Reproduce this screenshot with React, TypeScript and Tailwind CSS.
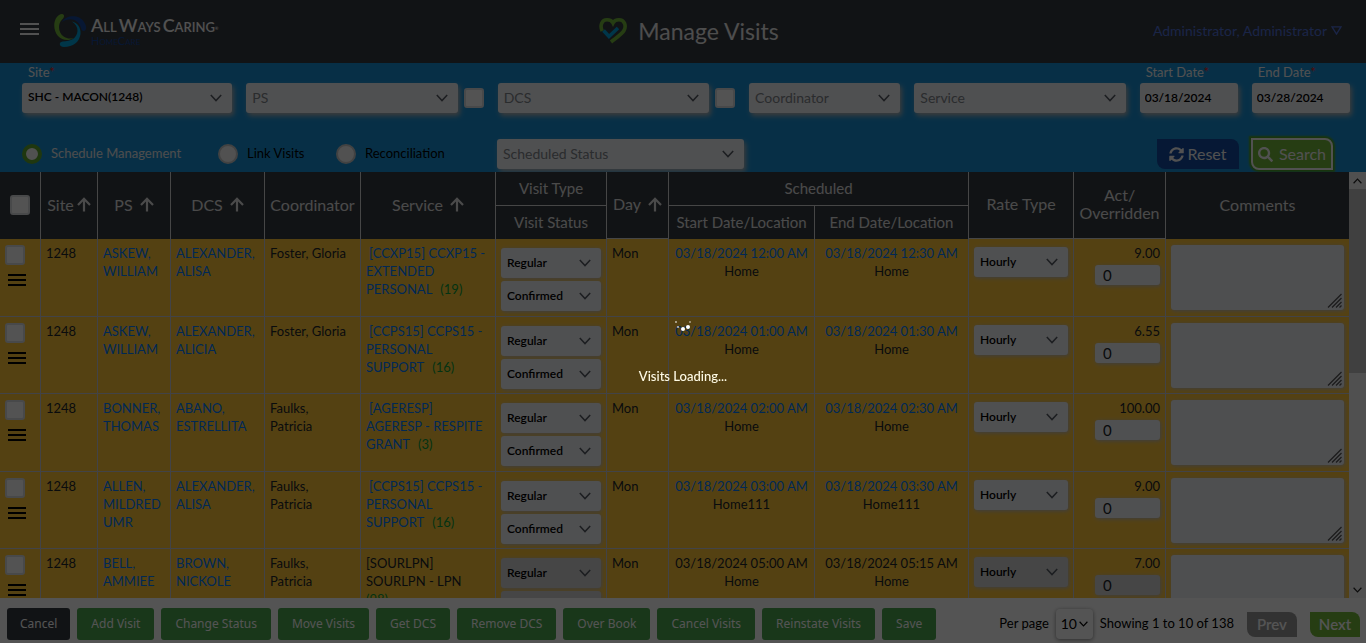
import React from "react";
import { FaSearch, FaSyncAlt } from "react-icons/fa";

type Option = { label: string; className?: string; muted?: boolean; disabled?: boolean };

function Chevron({ className, stroke = "#555b63" }: { className?: string; stroke?: string }) {
  return (
    <svg viewBox="0 0 12 8" className={className ?? "w-3 h-2"} fill="none" stroke={stroke} strokeWidth="1.5">
      <path d="M0.8 1 L6 6.6 L11.2 1" />
    </svg>
  );
}

function Picker({ label, className = "", muted = false, disabled = false }: Option) {
  return (
    <div className={`grid items-center rounded-[3px] ${disabled ? "bg-[#d4d4d4]" : "bg-[#f0f1f4]"} ${className}`}>
      <select
        aria-label={label}
        className={`[grid-area:1/1] h-full w-full min-w-0 appearance-none bg-transparent px-[6px] ${muted ? "text-[#80858b]" : "text-black"}`}
      >
        <option>{label}</option>
      </select>
      <Chevron className="[grid-area:1/1] pointer-events-none mr-[10px] h-2 w-3 justify-self-end" />
    </div>
  );
}

const filterPicker = "h-[30px] [&>select]:pb-[2px] shadow-[2px_3px_5px_#b4b4b4]";
const rowPicker = "h-[30px] text-[12px] font-semibold shadow-[1px_1px_4px_#b8bcc8]";

function Tick({ label }: { label: string }) {
  return (
    <input
      type="checkbox"
      aria-label={label}
      className="size-5 shrink-0 appearance-none rounded-[3px] border-2 border-[#dadce0] bg-[#fbfbfb]"
    />
  );
}

function Arrow() {
  return (
    <svg viewBox="0 0 14 15" className="h-[15px] w-[14px] shrink-0" fill="none" stroke="currentColor" strokeWidth="2.2">
      <path d="M7 14.5V2M1 8l6-6.2L13 8" />
    </svg>
  );
}

function Logo() {
  return (
    <div className="flex items-start gap-1">
      <svg viewBox="0 0 34 35" className="h-[35px] w-[34px]">
        <path fill="#74b83c" d="M9 1 C12 1.500 11.500 4.500 9 6.500 C4.500 11 5 20 11 23.800 C14 25.700 17 26 20.500 25 C16 28.500 9 27.500 5 23 C-1 16 0.500 4 7.500 1.200 Z" />
        <path fill="#17479a" d="M9 9 C13 2 26 1 31 9 C33 12 34 15 32.500 17 C31 19 28.500 18 28 15 C26 6 16 4 9 9 Z" />
        <path fill="#00a3dc" d="M19 8.500 C25 10 28 15 27.500 21 C26.500 29 20 34 11 34 C6 34 5.500 29 9.500 28.500 C18 28.500 24 25 24.500 18 C24.700 14 22.500 11 19 8.500 Z" />
      </svg>
      <div className="flex flex-col pt-[2px]">
        <span className="flex gap-[2px] text-[18px] font-semibold leading-[21px] text-[#f4f4f4] [font-variant:small-caps]">
          <span>All</span><span>Ways</span><span>Caring<sup className="text-[4px]">®</sup></span>
        </span>
        <span className="text-[11px] leading-[10px] text-[#17479a] [font-variant:small-caps]">HomeCare</span>
      </div>
    </div>
  );
}

function Heart() {
  return (
    <svg viewBox="0 0 28 27" className="h-[27px] w-7" fill="none" strokeWidth="3.600">
      <path d="M3.200 14 C0.500 8 3 2.800 8 2.800 C11 2.800 13 4 14 6 C15 4 17 2.800 20 2.800 C25 2.800 27.800 8 25 13.500 C23 17 17 21 12 25" stroke="#74b83c" />
      <path d="M4.500 13.500 L10 19.500 L19 11" stroke="#00a3dc" />
    </svg>
  );
}

type Visit = {
  ps: string; dcs: string; coord: string; service: string[]; count: string;
  start: string; end: string; place: string; hours: string; locked?: boolean;
};

const visits: Visit[] = [
  { ps: "ASKEW, WILLIAM", dcs: "ALEXANDER, ALISA", coord: "Foster, Gloria", service: ["[CCXP15] CCXP15 -", "EXTENDED", "PERSONAL"], count: "(19)", start: "03/18/2024 12:00 AM", end: "03/18/2024 12:30 AM", place: "Home", hours: "9.00" },
  { ps: "ASKEW, WILLIAM", dcs: "ALEXANDER, ALICIA", coord: "Foster, Gloria", service: ["[CCPS15] CCPS15 -", "PERSONAL", "SUPPORT"], count: "(16)", start: "03/18/2024 01:00 AM", end: "03/18/2024 01:30 AM", place: "Home", hours: "6.55" },
  { ps: "BONNER, THOMAS", dcs: "ABANO, ESTRELLITA", coord: "Faulks, Patricia", service: ["[AGERESP]", "AGERESP - RESPITE", "GRANT"], count: "(3)", start: "03/18/2024 02:00 AM", end: "03/18/2024 02:30 AM", place: "Home", hours: "100.00" },
  { ps: "ALLEN, MILDRED UMR", dcs: "ALEXANDER, ALISA", coord: "Faulks, Patricia", service: ["[CCPS15] CCPS15 -", "PERSONAL", "SUPPORT"], count: "(16)", start: "03/18/2024 03:00 AM", end: "03/18/2024 03:30 AM", place: "Home111", hours: "9.00" },
  { ps: "BELL, AMMIEE", dcs: "BROWN, NICKOLE", coord: "Faulks, Patricia", service: ["[SOURLPN]", "SOURLPN - LPN", ""], count: "(98)", start: "03/18/2024 05:00 AM", end: "03/18/2024 05:15 AM", place: "Home", hours: "7.00", locked: true },
];

const link = "text-[#007bff]";
const cell = "border-r border-b border-[#c9cbd6] px-[5px] align-top last:border-r-0";
const textCell = `${cell} pt-[5px]`;
const head = "border-r border-[#d5d5d5] p-0 pb-[2px] font-normal last:border-r-0";

function Service({ v }: { v: Visit }) {
  const tint = v.locked ? "" : link;
  return (
    <div className="flex flex-col">
      {v.service.map((line, i) => (
        <div key={i} className={`flex gap-2 whitespace-nowrap ${i === 0 && !v.locked ? "pl-[3px]" : ""}`}>
          {line && <a href="#service" className={tint}>{line}</a>}
          {i === 2 && <a href="#auth" className="text-[#0a9a3a]">{v.count}</a>}
        </div>
      ))}
    </div>
  );
}

function VisitRow({ v }: { v: Visit }) {
  return (
    <tr className="odd:h-[78px] even:h-[77px]">
      <td className={`${cell} pt-[6px]`}>
        <div className="flex flex-col gap-[9px]">
          <Tick label={`Select ${v.ps} ${v.start}`} />
          <button aria-label="Row menu" className="ml-[3px] flex w-[18px] flex-col gap-[3px]">
            <span className="h-[2px] bg-black" /><span className="h-[2px] bg-black" /><span className="h-[2px] bg-black" />
          </button>
        </div>
      </td>
      <td className={textCell}>1248</td>
      <td className={textCell}><a href="#ps" className={link}>{v.ps}</a></td>
      <td className={textCell}><a href="#dcs" className={link}>{v.dcs}</a></td>
      <td className={`${textCell} pr-[10px]`}>{v.coord}</td>
      <td className={textCell}><Service v={v} /></td>
      <td className={`${cell} pt-[9px]`}>
        <div className="flex flex-col gap-[3px]">
          <Picker label="Regular" className={rowPicker} disabled={v.locked} />
          <Picker label="Confirmed" className={rowPicker} disabled={v.locked} />
        </div>
      </td>
      <td className={textCell}>Mon</td>
      {[v.start, v.end].map((t) => (
        <td key={t} className={`${textCell} text-center`}>
          {v.locked ? <span>{t}</span> : <a href="#visit" className={link}>{t}</a>}
          <div>{v.place}</div>
        </td>
      ))}
      <td className={`${cell} pt-[8px]`}><Picker label="Hourly" className={rowPicker} disabled={v.locked} /></td>
      <td className={`${textCell} text-right`}>
        <div className="flex flex-col items-end gap-[3px]">
          <span>{v.hours}</span>
          <input
            aria-label="Overridden hours"
            defaultValue="0"
            className={`h-5 w-[65px] rounded-[3px] px-2 pb-px text-[15px] shadow-[1px_1px_4px_#b8bcc8] ${v.locked ? "bg-[#d4d4d4]" : "bg-[#f0f1f4]"}`}
          />
        </div>
      </td>
      <td className={`${cell} pt-[6px]`}>
        <div className="grid">
          <textarea aria-label="Comments" className="[grid-area:1/1] block h-[65px] w-full resize-none rounded-[3px] bg-[#eceef3] shadow-[1px_1px_4px_#b8bcc8]" />
          <svg viewBox="0 0 15 15" className="[grid-area:1/1] pointer-events-none mr-[2px] mb-[2px] size-[15px] self-end justify-self-end" stroke="#555" strokeWidth="1.300">
            <path d="M1 14.500L14.500 1M5 14.500L14.500 5M9 14.500L14.500 9M12.500 14.500L14.500 12.500" />
          </svg>
        </div>
      </td>
    </tr>
  );
}

function SortHead({ text, gap = "gap-[7px]", className = "" }: { text: string; gap?: string; className?: string }) {
  return (
    <th rowSpan={2} className={`${head} ${className}`}>
      <div className={`flex items-center justify-center ${gap}`}>{text}<Arrow /></div>
    </th>
  );
}

function DateField({ id, label, value }: { id: string; label: string; value: string }) {
  return (
    <div className="flex min-w-0 flex-[98] flex-col">
      <label htmlFor={id} className="h-5 pl-[6px] text-[13px] leading-[18px] text-[#f4f4f4]">{label}<span className="text-[#e02020]">*</span></label>
      <input id={id} defaultValue={value} className="h-[30px] w-full rounded-[3px] bg-[#f0f1f4] px-[5px] pb-[2px] text-[12px] font-semibold shadow-[2px_3px_5px_#b4b4b4]" />
    </div>
  );
}

const actions = ["Add Visit", "Change Status", "Move Visits", "Get DCS", "Remove DCS", "Over Book", "Cancel Visits", "Reinstate Visits", "Save"];
const modes = [
  { name: "Schedule Management", width: "w-[196px]" },
  { name: "Link Visits", width: "w-[118px]" },
  { name: "Reconciliation", width: "w-[161px]" },
];

export default function App() {
  return (
    <div className="flex h-screen flex-col overflow-hidden bg-white font-['Lato','Liberation_Sans',sans-serif] text-black">
      <header className="grid h-[63px] shrink-0 grid-cols-[1fr_auto_1fr] items-center bg-[#363b41] pr-6 pb-[2px] pl-5">
        <div className="flex items-center gap-[14px]">
          <button aria-label="Main menu" className="flex w-[19px] flex-col gap-[3px] pb-1">
            <span className="h-[2px] bg-[#f4f4f4]" /><span className="h-[2px] bg-[#f4f4f4]" /><span className="h-[2px] bg-[#f4f4f4]" />
          </button>
          <Logo />
        </div>
        <div className="flex items-center gap-[11px] pl-4">
          <Heart />
          <h1 className="text-[23px] leading-8 text-[#e8e8e8]">Manage Visits</h1>
        </div>
        <button className="flex items-center gap-1 justify-self-end text-[14px] text-[#5070d8]">
          Administrator, Administrator
          <svg viewBox="0 0 12 10" className="h-[9px] w-[11px]" fill="none" stroke="currentColor" strokeWidth="1.500"><path d="M1 1h10L6 9z" /></svg>
        </button>
      </header>

      <section className="flex h-[109px] shrink-0 flex-col gap-[25px] bg-[#1890d5] pr-4 pl-[22px]">
        <div className="flex items-end gap-[14px]">
          <div className="flex min-w-0 flex-[210] flex-col">
            <label className="h-5 pl-[6px] text-[13px] leading-[18px] text-[#f4f4f4]">Site<span className="text-[#e02020]">*</span></label>
            <Picker label="SHC - MACON(1248)" className={`${filterPicker} text-[12px] font-semibold`} />
          </div>
          {["PS", "DCS"].map((n) => (
            <div key={n} className="flex min-w-0 flex-[237] items-center gap-[6px]">
              <Picker label={n} muted className={`${filterPicker} min-w-0 flex-1 text-[14px]`} />
              <Tick label={`Include inactive ${n}`} />
            </div>
          ))}
          <Picker label="Coordinator" muted className={`${filterPicker} min-w-0 flex-[151] text-[14px]`} />
          <Picker label="Service" muted className={`${filterPicker} min-w-0 flex-[211] text-[14px]`} />
          <DateField id="start" label="Start Date" value="03/18/2024" />
          <DateField id="end" label="End Date" value="03/28/2024" />
        </div>
        <div className="flex items-center">
          {modes.map((m, i) => (
            <label key={m.name} className={`flex shrink-0 items-center gap-[9px] text-[13px] ${m.width} ${i === 0 ? "text-[#e8e8e8]" : "text-black"}`}>
              <input
                type="radio"
                name="mode"
                defaultChecked={i === 0}
                className="size-5 appearance-none rounded-full border-2 border-[#c8c8c8] bg-[#f4f4f4] checked:border-4 checked:border-[#5fa82e]"
              />
              {m.name}
            </label>
          ))}
          <Picker label="Scheduled Status" muted className={`${filterPicker} w-[247px] text-[14px]`} />
          <div className="mr-[17px] ml-auto flex items-center gap-3">
            <button className="flex h-[30px] w-[82px] items-center justify-center gap-[3px] rounded-tr-lg rounded-bl-lg bg-[#134aa0] text-[16px] text-[#f4f4f4]">
              <FaSyncAlt size={15} />Reset
            </button>
            <button className="flex h-8 w-[82px] items-center justify-center gap-[6px] rounded-tr-lg rounded-bl-lg border-2 border-[#f4f4f4] bg-[#74b83c] text-[16px] text-[#f4f4f4] shadow-[0_0_2px_2px_#4fa020]">
              <FaSearch size={15} />Search
            </button>
          </div>
        </div>
      </section>

      <main className="flex min-h-0 flex-1">
        <div className="min-w-0 flex-1 overflow-hidden">
          <table className="w-full table-fixed border-separate border-spacing-0 text-[13px] leading-[18px]">
            <colgroup>
              <col className="w-[41px]" /><col className="w-[57px]" /><col className="w-[73px]" /><col className="w-[94px]" />
              <col className="w-[96px]" /><col className="w-[135px]" /><col className="w-[111px]" /><col className="w-[62px]" />
              <col className="w-[146px]" /><col className="w-[154px]" /><col className="w-[105px]" /><col className="w-[92px]" /><col />
            </colgroup>
            <thead className="bg-[#363b41] text-[16px] text-[#e0e0e0]">
              <tr className="h-[34px]">
                <th rowSpan={2} className={head}><div className="flex justify-center"><Tick label="Select all" /></div></th>
                <SortHead text="Site" gap="gap-[3px]" />
                <SortHead text="PS" />
                <SortHead text="DCS" />
                <th rowSpan={2} className={head}>Coordinator</th>
                <SortHead text="Service" />
                <th className={`${head} border-b text-[15px]`}>Visit Type</th>
                <SortHead text="Day" className="border-b" />
                <th colSpan={2} className={`${head} border-b text-[15px]`}>Scheduled</th>
                <th rowSpan={2} className={`${head} border-b`}>Rate Type</th>
                <th rowSpan={2} className={`${head} border-b`}>Act/<br />Overridden</th>
                <th rowSpan={2} className={head}>Comments</th>
              </tr>
              <tr className="h-[33px] text-[15px]">
                <th className={head}>Visit Status</th>
                <th className={head}>Start Date/Location</th>
                <th className={`${head} border-r!`}>End Date/Location</th>
              </tr>
            </thead>
            <tbody className="bg-[#ffc639] text-[#212529]">
              {visits.map((v) => <VisitRow key={v.start} v={v} />)}
            </tbody>
          </table>
        </div>
        <div className="flex w-[17px] flex-col bg-[#f1f1f1]" aria-hidden="true">
          <div className="flex h-[17px] items-center justify-center"><Chevron stroke="#222" className="h-[6px] w-[9px] rotate-180" /></div>
          <div className="h-[184px] bg-[#c1c1c1]" />
          <div className="mt-auto flex h-[17px] items-center justify-center"><Chevron stroke="#222" className="h-[6px] w-[9px]" /></div>
        </div>
      </main>

      <footer className="flex h-[45px] shrink-0 items-center justify-between pt-[10px] pr-[6px] pb-[3px] pl-[7px]">
        <div className="flex gap-[7px] font-['Noto_Sans',sans-serif] text-[12px] text-white">
          <button className="h-8 rounded-[3px] bg-[#363b41] px-[13px]">Cancel</button>
          {actions.map((a) => <button key={a} className="h-8 rounded-[3px] bg-[#4ca650] px-[14px]">{a}</button>)}
        </div>
        <div className="flex items-center text-[13px]">
          <label htmlFor="per">Per page</label>
          <div className="mx-[7px] grid h-[30px] w-[37px] items-center rounded-[4px] bg-white shadow-[0_1px_4px_#888]">
            <select id="per" className="[grid-area:1/1] w-full appearance-none bg-transparent pb-[2px] pl-[5px] text-[14px]"><option>10</option></select>
            <Chevron stroke="#000" className="[grid-area:1/1] pointer-events-none mr-[5px] h-[6px] w-[9px] justify-self-end" />
          </div>
          <span>Showing 1 to 10 of 138</span>
          <button className="ml-[13px] h-[25px] w-[50px] rounded-tr-lg rounded-bl-lg bg-[#999] text-[15px] font-semibold text-white">Prev</button>
          <button className="ml-[13px] h-[25px] w-[50px] rounded-tr-lg rounded-bl-lg bg-[#74b83c] text-[15px] font-semibold text-white">Next</button>
        </div>
      </footer>

      <div className="fixed inset-0 flex flex-col items-center bg-black/67 pt-[319px]" role="status">
        <svg viewBox="0 0 18 14" className="h-[14px] w-[18px]" fill="#fff">
          <circle cx="2" cy="3" r="0.900" opacity=".7" /><circle cx="4" cy="8" r="1.100" opacity=".7" />
          <circle cx="9" cy="10" r="2" /><circle cx="14" cy="8" r="2" /><circle cx="16" cy="3" r="1" opacity=".5" />
        </svg>
        <p className="mt-[34px] text-[13px] font-medium leading-[18px] text-[#fffbe6]">Visits Loading...</p>
      </div>
    </div>
  );
}
